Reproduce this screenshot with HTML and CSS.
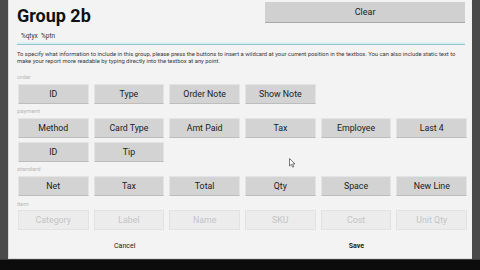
FILE: index.html
```html
<!DOCTYPE html>
<html>
<head>
<meta charset="utf-8">
<link rel="stylesheet" href="styles.css">
</head>
<body>
<div class="screen">
  <div class="main">
    <div class="frame-left"></div>
    <div class="dialog">
      <div class="header">
        <div class="title">Group 2b</div>
        <div class="clear">Clear</div>
      </div>
      <div class="field">%qtyx&nbsp;&nbsp;%ptn</div>
      <div class="underline"></div>
      <div class="desc">To specify what information to include in this group, please press the buttons to insert a wildcard at your current position in the textbox. You can also include static text to<br>make your report more readable by typing directly into the textbox at any point.</div>

      <div class="section-label first">order</div>
      <div class="grid">
        <div class="btn">ID</div>
        <div class="btn">Type</div>
        <div class="btn">Order Note</div>
        <div class="btn">Show Note</div>
      </div>

      <div class="section-label">payment</div>
      <div class="grid">
        <div class="btn">Method</div>
        <div class="btn">Card Type</div>
        <div class="btn">Amt Paid</div>
        <div class="btn">Tax</div>
        <div class="btn">Employee</div>
        <div class="btn">Last 4</div>
        <div class="btn">ID</div>
        <div class="btn">Tip</div>
      </div>

      <div class="section-label">standard</div>
      <div class="grid">
        <div class="btn">Net</div>
        <div class="btn">Tax</div>
        <div class="btn">Total</div>
        <div class="btn">Qty</div>
        <div class="btn">Space</div>
        <div class="btn">New Line</div>
      </div>

      <div class="section-label item">item</div>
      <div class="grid">
        <div class="btn disabled">Category</div>
        <div class="btn disabled">Label</div>
        <div class="btn disabled">Name</div>
        <div class="btn disabled">SKU</div>
        <div class="btn disabled">Cost</div>
        <div class="btn disabled">Unit Qty</div>
      </div>

      <div class="footer">
        <div class="foot-btn">Cancel</div>
        <div class="foot-btn save">Save</div>
      </div>

      <svg class="cursor" width="7" height="10" viewBox="0 0 7 10"><path d="M0.5 0.5 L0.5 8 L2.3 6.3 L3.6 9.2 L4.8 8.7 L3.6 5.9 L6 5.9 Z" fill="#fff" stroke="#555" stroke-width="0.8"/></svg>
    </div>
    <div class="frame-right"></div>
  </div>
  <div class="bottom-bar"></div>
</div>
</body>
</html>
```
FILE: styles.css
```css
html, body {
  margin: 0;
  padding: 0;
  background: #111;
}
.screen {
  width: 480px;
  height: 270px;
  display: flex;
  flex-direction: column;
  overflow: hidden;
  font-family: Roboto, "Liberation Sans", sans-serif;
}
.main {
  display: flex;
  height: 259px;
}
.frame-left {
  width: 8px;
  background: #4a4a4a;
}
.frame-right {
  width: 8px;
  background: #4a4a4a;
}
.dialog {
  position: relative;
  width: 455px;
  background: #f3f3f3;
  border-left: 1px solid #d8d8d8;
  border-bottom: 1px solid #dcdcdc;
  padding: 2px 7px 0 8px;
  display: flex;
  flex-direction: column;
}
.bottom-bar {
  flex: 1;
  background: #0c0c0c;
  border-top: 1px solid #3a3a3a;
}
.header {
  display: flex;
  justify-content: space-between;
  align-items: flex-start;
  height: 25px;
}
.title {
  font-size: 18px;
  font-weight: bold;
  line-height: 22px;
  margin-top: 3px;
  color: #111;
}
.clear {
  width: 200px;
  height: 20px;
  background: #d0d0d0;
  border-bottom: 1px solid #a9a9a9;
  font-size: 9px;
  line-height: 20px;
  text-align: center;
  color: #222;
}
.field {
  margin-top: 4px;
  height: 11px;
  line-height: 11px;
  font-size: 6.5px;
  color: #333;
  padding-left: 4px;
}
.underline {
  height: 2px;
  background: #d9eff4;
  border-bottom: 1px solid #92c4d0;
}
.desc {
  margin-top: 6px;
  font-size: 5.85px;
  line-height: 7px;
  color: #3a3a3a;
  white-space: nowrap;
}
.section-label {
  margin-top: 3px;
  height: 8px;
  line-height: 8px;
  font-size: 6px;
  color: #b8b8b8;
  margin-bottom: 3px;
}
.section-label.first {
  margin-top: 8px;
}
.section-label.item {
  margin-top: 4px;
  margin-bottom: 2px;
}
.grid {
  display: grid;
  grid-template-columns: repeat(6, 1fr);
  column-gap: 5px;
  row-gap: 4px;
  margin-left: 1px;
  margin-right: -2px;
}
.btn {
  height: 18px;
  line-height: 18px;
  background: #d3d3d3;
  border: 1px solid #e4e4e4;
  border-bottom-color: #bdbdbd;
  text-align: center;
  font-size: 8.8px;
  color: #1c1c1c;
}
.btn.disabled {
  background: #ececec;
  border-color: #e2e2e2;
  color: #c4c4c4;
}
.footer {
  flex: 1;
  display: flex;
  margin: 0 -7px 0 -8px;
  padding-top: 3px;
}
.foot-btn {
  flex: 1;
  display: flex;
  align-items: center;
  justify-content: center;
  font-size: 7px;
  color: #222;
}
.foot-btn.save {
  font-weight: bold;
}
.cursor {
  position: absolute;
  left: 280px;
  top: 158px;
}
```
